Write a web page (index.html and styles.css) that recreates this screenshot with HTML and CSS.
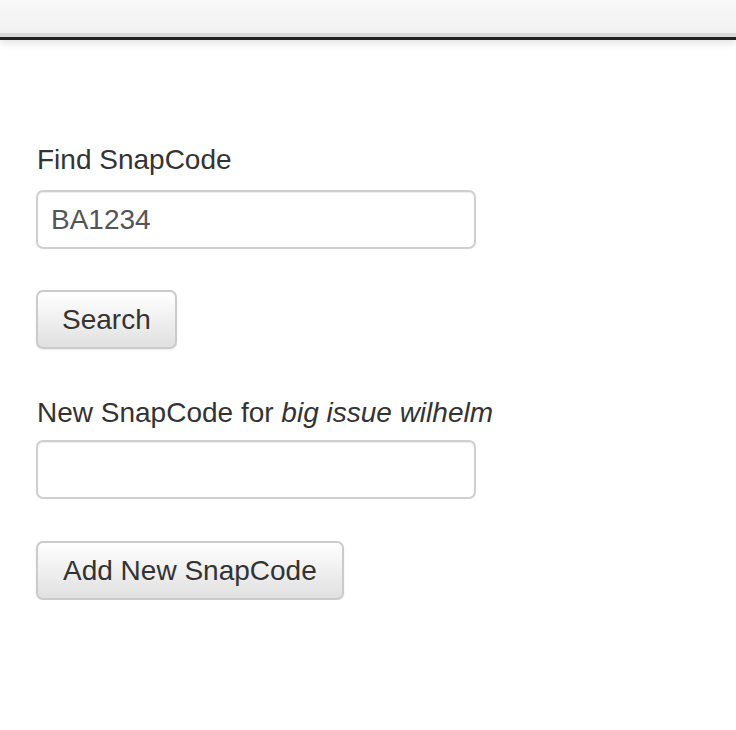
FILE: index.html
```html
<!DOCTYPE html>
<html>
<head>
<meta charset="utf-8">
<link rel="stylesheet" href="styles.css">
</head>
<body>
<div class="navbar"></div>
<main class="container">
  <form class="form form-find">
    <label class="label label-find" for="find">Find SnapCode</label>
    <input class="input" id="find" type="text" value="BA1234">
    <button class="btn btn-search" type="button">Search</button>
  </form>
  <form class="form form-new">
    <label class="label label-new" for="new">New SnapCode for <em>big issue wilhelm</em></label>
    <input class="input" id="new" type="text" value="">
    <button class="btn btn-add" type="button">Add New SnapCode</button>
  </form>
</main>
</body>
</html>
```
FILE: styles.css
```css
html, body {
  margin: 0;
  padding: 0;
  background: #fff;
}
body {
  font-family: "Liberation Sans", Arial, sans-serif;
  font-size: 28px;
  color: #333;
}
.navbar {
  height: 33px;
  background: linear-gradient(to bottom, #f8f8f8 0%, #f2f2f2 100%);
  border-bottom: 4px solid #dadada;
  box-shadow: 0 3px 0 #222, 0 6px 8px rgba(0, 0, 0, 0.12);
  position: relative;
  z-index: 1;
}
.container {
  padding: 103px 0 0 36px;
}
.form {
  display: flex;
  flex-direction: column;
  align-items: flex-start;
}
.label {
  display: block;
  line-height: 40px;
  padding-left: 1px;
}
.label-find {
  margin-bottom: 10px;
}
.label-new {
  margin-bottom: 7px;
}
.label em {
  font-style: italic;
}
.input {
  box-sizing: border-box;
  width: 440px;
  height: 59px;
  margin: 0;
  padding: 0 13px;
  border: 2px solid #cfcfcf;
  border-radius: 7px;
  box-shadow: inset 0 1px 1px rgba(0, 0, 0, 0.075);
  font-family: "Liberation Sans", Arial, sans-serif;
  font-size: 28px;
  color: #555;
  background: #fff;
  outline: none;
}
.btn {
  box-sizing: border-box;
  height: 59px;
  margin: 41px 0 0 0;
  padding: 0 24px;
  border: 2px solid #cbcbcb;
  border-radius: 7px;
  background: linear-gradient(to bottom, #ffffff 0%, #e0e0e0 100%);
  box-shadow: inset 0 1px 0 rgba(255, 255, 255, 0.15), 0 1px 2px rgba(0, 0, 0, 0.075);
  font-family: "Liberation Sans", Arial, sans-serif;
  font-size: 28px;
  color: #333;
  cursor: pointer;
}
.btn-add {
  margin-top: 42px;
  padding: 0 25px;
}
.form-new {
  margin-top: 44px;
}
```
